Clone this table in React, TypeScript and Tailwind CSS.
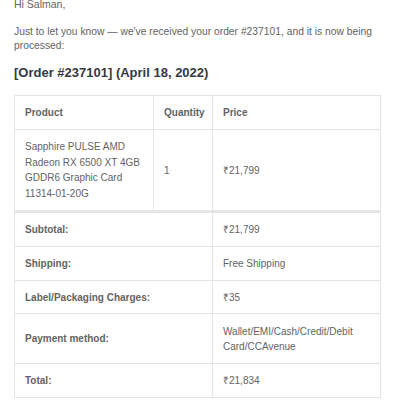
import React from "react";

const cell = "border border-[#e5e5e5] px-[10px] align-middle text-left";

export default function App() {
    return (
        <div className="w-[400px] h-[416px] overflow-hidden bg-white text-[#636363] text-[10px] leading-[15px]" style={{ fontFamily: '"Liberation Sans", Arial, sans-serif' }}>
            <div className="px-[14px] -mt-[3px]">
                <p className="mb-[13px] text-[10.5px]">Hi Salman,</p>
                <p className="mb-[12px] text-[10.3px] leading-[14px]">Just to let you know — we've received your order #237101, and it is now being processed:</p>
                <h2 className="text-[13px] font-bold text-[#333a44] leading-[16px] mb-[14px]">[Order #237101] (April 18, 2022)</h2>
                <table className="w-[367px] table-fixed border-collapse border border-[#e5e5e5]">
                    <colgroup>
                        <col className="w-[139px]" />
                        <col className="w-[59px]" />
                        <col />
                    </colgroup>
                    <thead>
                        <tr className="h-[34px]">
                            <th className={`${cell} font-bold`}>Product</th>
                            <th className={`${cell} font-bold px-[7px]`}>Quantity</th>
                            <th className={`${cell} font-bold`}>Price</th>
                        </tr>
                    </thead>
                    <tbody>
                        <tr className="h-[82px]">
                            <td className={`${cell} leading-[15.5px]`}>Sapphire PULSE AMD Radeon RX 6500 XT 4GB GDDR6 Graphic Card 11314-01-20G</td>
                            <td className={`${cell} px-[9px]`}>1</td>
                            <td className={cell}>₹21,799</td>
                        </tr>
                    </tbody>
                    <tfoot>
                        <tr className="h-[35px]">
                            <th colSpan={2} className={`${cell} border-t-[3px] font-bold`}>Subtotal:</th>
                            <td className={`${cell} border-t-[3px]`}>₹21,799</td>
                        </tr>
                        <tr className="h-[34px]">
                            <th colSpan={2} className={`${cell} font-bold`}>Shipping:</th>
                            <td className={cell}>Free Shipping</td>
                        </tr>
                        <tr className="h-[33px]">
                            <th colSpan={2} className={`${cell} font-bold`}>Label/Packaging Charges:</th>
                            <td className={cell}>₹35</td>
                        </tr>
                        <tr className="h-[50px]">
                            <th colSpan={2} className={`${cell} font-bold`}>Payment method:</th>
                            <td className={cell}>Wallet/EMI/Cash/Credit/Debit Card/CCAvenue</td>
                        </tr>
                        <tr className="h-[34px]">
                            <th colSpan={2} className={`${cell} font-bold`}>Total:</th>
                            <td className={cell}>₹21,834</td>
                        </tr>
                    </tfoot>
                </table>
            </div>
        </div>
    );
}
